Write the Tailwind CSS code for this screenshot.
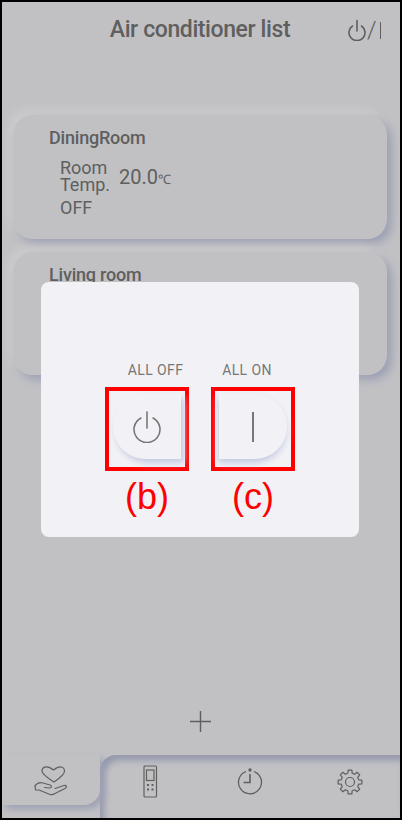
<!DOCTYPE html>
<html lang="en">
<head>
    <meta charset="UTF-8">
    <meta name="viewport" content="width=device-width, initial-scale=1.0">
    <title>Air conditioner list</title>
    <script src="https://cdn.jsdelivr.net/npm/@tailwindcss/browser@4"></script>
</head>
<body class="bg-black font-['Roboto',sans-serif]">
    <div class="relative w-[402px] h-[820px] overflow-hidden border-2 border-black bg-[#f2f2f6] flex flex-col text-[#777]">
        <!-- Header -->
        <header class="relative h-[55px] shrink-0 flex items-center justify-center pr-[2px]">
            <h1 class="text-[23px] font-medium tracking-[-0.4px] pt-[2px]">Air conditioner list</h1>
            <div class="absolute right-[19px] top-[16px] flex items-center">
                <svg width="20" height="22" viewBox="0 0 20 22" fill="none" stroke="#777" stroke-width="1.6" stroke-linecap="round">
                    <path d="M5.5 7 A8 8 0 1 0 14.5 7"/>
                    <path d="M10 1.500 V12"/>
                </svg>
                <span class="text-[24px] leading-none font-light">/</span>
                <span class="w-[1.5px] h-[17px] bg-[#777] ml-[3px]"></span>
            </div>
        </header>

        <!-- Air conditioner cards -->
        <main class="pl-[11px] pr-[13px] pt-[58px] flex flex-col gap-[13px]">
            <div class="h-[124px] rounded-[20px] bg-[#f2f2f6] shadow-[5px_5px_10px_#c4c9e0,-5px_-5px_10px_#fff] pl-[36px] pt-[13px]">
                <h2 class="text-[18px] leading-[20px] font-medium tracking-[-0.2px]">DiningRoom</h2>
                <div class="pl-[11px] pt-[11px]">
                    <div class="flex items-center gap-[9px]">
                        <span class="text-[18px] leading-[17px]">Room<br>Temp.</span>
                        <span class="text-[20px] leading-[22px] pt-[4px]">20.0<span class="text-[13px]">℃</span></span>
                    </div>
                    <p class="text-[18px] leading-[20px] pt-[5px]">OFF</p>
                </div>
            </div>
            <div class="h-[123px] rounded-[20px] bg-[#f2f2f6] shadow-[5px_5px_10px_#c4c9e0,-5px_-5px_10px_#fff] pl-[36px] pt-[13px]">
                <h2 class="text-[18px] leading-[20px] font-medium tracking-[-0.2px]">Living room</h2>
            </div>
        </main>

        <!-- Add button -->
        <div class="flex justify-center mt-auto mb-[23px] pr-[2px]">
            <svg width="21" height="21" viewBox="0 0 21 21" stroke="#777" stroke-width="1.4">
                <path d="M10.500 0 V21 M0 10.500 H21"/>
            </svg>
        </div>

        <!-- Tabs -->
        <nav class="h-[63px] shrink-0 flex">
            <div class="w-[98px] h-[50px] rounded-br-[16px] bg-[#f2f2f6] shadow-[4px_4px_7px_#c4c9e0] flex items-center justify-center pt-[2px] z-10">
                <svg width="34" height="32" viewBox="0 0 34 32" fill="none" stroke="#777" stroke-width="1.2" stroke-linejoin="round" stroke-linecap="round">
                    <path d="M20 16 C14 12 8 8.500 8 5 C8 2 10.500 0.800 12.500 0.800 C15 0.800 17 2 19.500 4 C22 2 24 0.800 26.500 0.800 C29 0.800 30.500 3 30.500 5 C30.500 9 25 12.500 20 16 Z" transform="translate(0 1)"/>
                    <path d="M1 21 C3 18 6 17 9 18 L16 20 C18 20.600 18 23 15.500 23 L10.500 22.500"/>
                    <path d="M1 21 L1.500 25 L5 25 L16 29.500 C18 30 19.500 29.500 21 28.500 L31 23.500 C33.500 22 32.500 20 30 20.500 L21 23.500"/>
                </svg>
            </div>
            <div class="flex-1 rounded-tl-[16px] bg-[#f2f2f6] shadow-[inset_4px_5px_7px_#b8bdd6] grid grid-cols-3 pb-[10px]">
                <div class="flex items-center justify-center">
                    <svg width="16" height="33" viewBox="0 0 16 33" fill="none" stroke="#777" stroke-width="1.2">
                        <rect x="2" y="1" width="12.500" height="31" rx="1"/>
                        <rect x="4.500" y="5" width="7.500" height="10.500"/>
                        <g fill="#777" stroke="none">
                            <rect x="5" y="19" width="2" height="2"/><rect x="9.500" y="19" width="2" height="2"/>
                            <rect x="5" y="23.500" width="2" height="2"/><rect x="9.500" y="23.500" width="2" height="2"/>
                        </g>
                    </svg>
                </div>
                <div class="flex items-center justify-center">
                    <svg width="26" height="27" viewBox="0 0 26 27" fill="none" stroke="#777" stroke-width="1.3">
                        <path d="M9 3.500 A11.500 11.500 0 1 0 17 3.500"/>
                        <circle cx="13" cy="2" r="1.700" fill="#777" stroke="none"/>
                        <path d="M13 6 V14.500 H6.500" stroke-width="1.600"/>
                    </svg>
                </div>
                <div class="flex items-center justify-center">
                    <svg width="26" height="26" viewBox="-13 -13 26 26" fill="none" stroke="#777" stroke-width="1.2" stroke-linejoin="round">
                        <circle r="4.500"/>
                        <path d="M-2.180 -8.730 L-1.880 -11.850 L1.880 -11.850 L2.180 -8.730 L4.630 -7.710 L7.050 -9.710 L9.710 -7.050 L7.710 -4.630 L8.730 -2.180 L11.850 -1.880 L11.850 1.880 L8.730 2.180 L7.710 4.630 L9.710 7.050 L7.050 9.710 L4.630 7.710 L2.180 8.730 L1.880 11.850 L-1.880 11.850 L-2.180 8.730 L-4.630 7.710 L-7.050 9.710 L-9.710 7.050 L-7.710 4.630 L-8.730 2.180 L-11.850 1.880 L-11.850 -1.880 L-8.730 -2.180 L-7.710 -4.630 L-9.710 -7.050 L-7.050 -9.710 L-4.630 -7.710 Z"/>
                    </svg>
                </div>
            </div>
        </nav>

        <!-- Dimmed layer and ALL ON / ALL OFF dialog -->
        <div class="absolute inset-0 z-20 bg-black/20 flex justify-center">
            <div class="mt-[280px] ml-[-2px] w-[318px] h-[255px] rounded-[8px] bg-[#f2f2f6] pt-[80px] pl-[64px]">
                <div class="flex gap-[22px]">
                    <div class="w-[84px] flex flex-col items-center">
                        <span class="text-[14px] leading-[16px] text-[#777] tracking-[0.4px] pl-[17px] whitespace-nowrap">ALL OFF</span>
                        <div class="mt-[9px] w-[84px] h-[84px] border-4 border-[#ff0000] pl-[4px] pt-[3px]">
                            <button class="w-[68px] h-[65px] rounded-l-[34px] bg-[#f2f2f6] shadow-[3px_4px_7px_#c4c9e0] flex items-center justify-center">
                                <svg width="30" height="32" viewBox="0 0 30 32" fill="none" stroke="#777" stroke-width="1.6" stroke-linecap="round">
                                    <path d="M9 7 A13 13 0 1 0 21 7"/>
                                    <path d="M15 1 V17"/>
                                </svg>
                            </button>
                        </div>
                        <span class="text-[36px] leading-[40px] text-[#ff0000] font-['Liberation_Sans',sans-serif] mt-[6px]">(b)</span>
                    </div>
                    <div class="w-[84px] flex flex-col items-center">
                        <span class="text-[14px] leading-[16px] text-[#777] tracking-[0.4px] pr-[12px] whitespace-nowrap">ALL ON</span>
                        <div class="mt-[9px] w-[84px] h-[84px] border-4 border-[#ff0000] pl-[4px] pt-[3px]">
                            <button class="w-[68px] h-[65px] rounded-r-[34px] bg-[#f2f2f6] shadow-[-1px_4px_7px_#c4c9e0] flex items-center justify-center">
                                <span class="block w-[2px] h-[30px] bg-[#777]"></span>
                            </button>
                        </div>
                        <span class="text-[36px] leading-[40px] text-[#ff0000] font-['Liberation_Sans',sans-serif] mt-[6px]">(c)</span>
                    </div>
                </div>
            </div>
        </div>
    </div>
</body>
</html>
